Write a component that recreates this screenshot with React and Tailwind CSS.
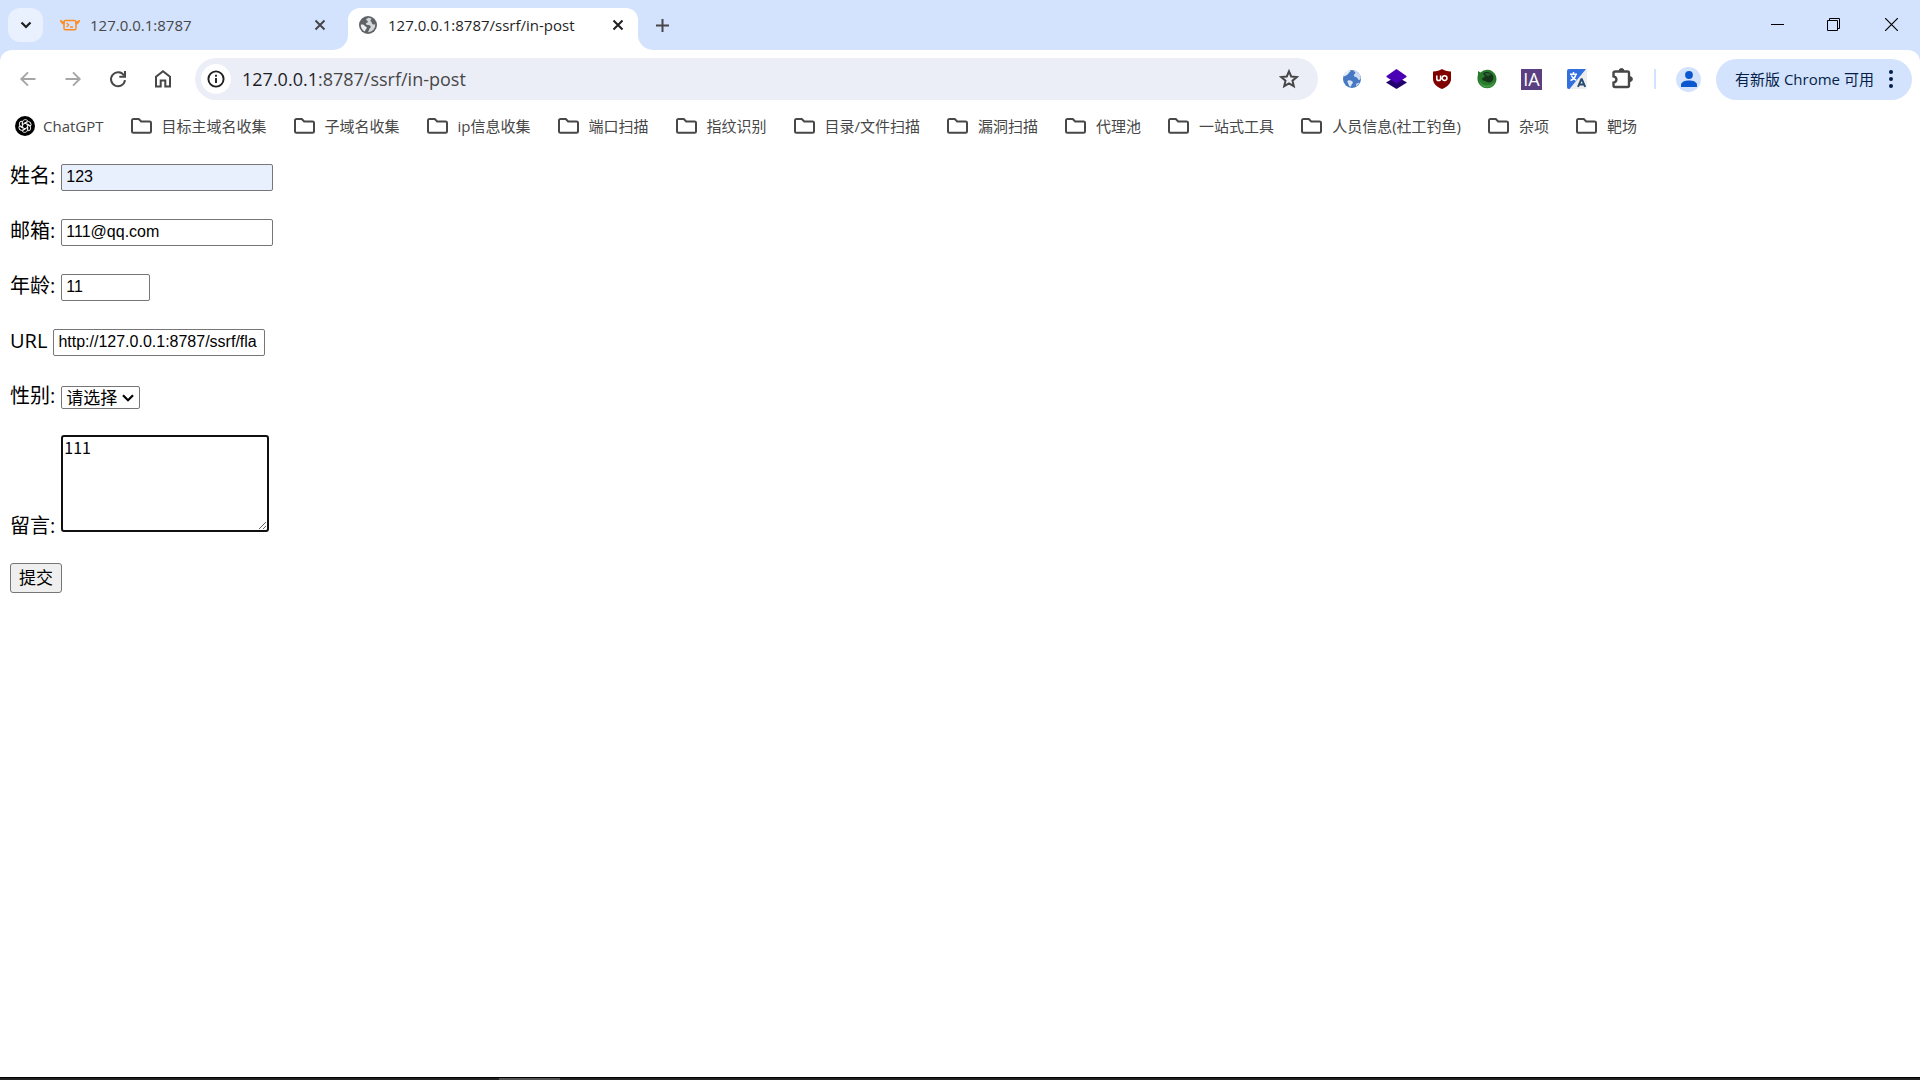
import { clsx } from 'clsx'

const folders = [
  '目标主域名收集',
  '子域名收集',
  'ip信息收集',
  '端口扫描',
  '指纹识别',
  '目录/文件扫描',
  '漏洞扫描',
  '代理池',
  '一站式工具',
  '人员信息(社工钓鱼)',
  '杂项',
  '靶场'
]

const fieldClass = 'h-[27px] rounded-[2px] border border-[#767676] px-1 pb-0.5 font-["Liberation_Sans",sans-serif] text-base leading-5 text-black outline-none'

function CloseIcon({ className }) {
  return (
    <svg viewBox="0 0 12 12" className={clsx('size-3', className)} fill="none" stroke="currentColor" strokeWidth="2">
      <path d="M1.5 1.5l9 9M10.5 1.5l-9 9" />
    </svg>
  )
}

function OxIcon() {
  return (
    <svg viewBox="0 0 20 12" className="h-3 w-5" fill="none" stroke="#ff8a1f">
      <path d="M.5 1c.2 2.600 1.200 4 3.600 4V3C2.700 3 1.500 2.300.5 1zM19.500 1c-.2 2.600-1.200 4-3.600 4V3c1.400 0 2.600-.7 3.600-2z" fill="#ff8a1f" strokeWidth="1" />
      <rect x="4" y="1.600" width="12" height="9.200" rx="1.600" strokeWidth="1.500" />
      <path d="M6.700 4l2 2-2 2M10 8h3" strokeWidth="1.300" />
    </svg>
  )
}

function GlobeIcon() {
  return (
    <svg viewBox="0 0 18 18" className="size-[18px]">
      <circle cx="9" cy="9" r="9" fill="#5f6368" />
      <path d="M9.500 1.700c-1.300.7-2.600 1.100-2.200 2.300.4 1 1.700.5 1.600 1.800-.1 1-1.600.8-1.900 1.800-.3.900.5 1.300 1.700 1.300 1.800 0 3 .6 3.100 1.800.1 1.300-1.200 1.400-1.600 2.500-.3 1-.5 2.100-1.400 3.100A7.300 7.300 0 0 0 16.200 8c-.9.7-2 .7-2.800 0-.8-.8-.3-1.700-1.200-2.300-1-.7-.8-1.600.3-3a7 7 0 0 0-3-1z" fill="#d5d7d9" />
      <path d="M1.800 8.500c1.800-.3 3.200.2 3.900 1.300.6 1 1.900.8 2.100 1.800.2 1.200-1.300 1.600-1.900 3.800A7.300 7.300 0 0 1 1.800 8.500z" fill="#eceded" />
    </svg>
  )
}

function BackIcon({ className }) {
  return (
    <svg viewBox="0 0 20 20" className={clsx('size-5', className)} fill="none" stroke="currentColor" strokeWidth="1.900">
      <path d="M17.500 10H4M10 3.300L3.300 10l6.700 6.700" />
    </svg>
  )
}

function ReloadIcon() {
  return (
    <svg viewBox="0 0 20 20" className="size-5" fill="none" stroke="currentColor" strokeWidth="2">
      <path d="M16 6.500A7 7 0 1 0 17 11.200" />
      <path d="M17 2v5.700h-5.700" />
    </svg>
  )
}

function HomeIcon() {
  return (
    <svg viewBox="0 0 20 20" className="size-5" fill="none" stroke="currentColor" strokeWidth="2">
      <path d="M3 17.500V7.800l7-5.500 7 5.500v9.700h-4.700v-6H7.700v6z" />
    </svg>
  )
}

function StarIcon() {
  return (
    <svg viewBox="0 0 20 20" className="size-5" fill="none" stroke="#474747" strokeWidth="2">
      <path d="M10 2.300l2.200 5.200 5.600.5-4.300 3.700 1.300 5.500-4.800-2.900-4.800 2.900 1.300-5.500L2.200 8l5.600-.5z" />
    </svg>
  )
}

function FolderIcon() {
  return (
    <svg viewBox="0 0 21 17" className="h-[17px] w-[21px] shrink-0" fill="none" stroke="#474747" strokeWidth="2">
      <path d="M2.500 1h5.300l2.400 2.400h8.300c.8 0 1.500.5 1.500 1.400v8.700c0 .8-.6 1.300-1.400 1.300H2.400c-.8 0-1.400-.5-1.400-1.300v-11C1 1.600 1.600 1 2.500 1z" />
    </svg>
  )
}

function ChatGptIcon() {
  return (
    <svg viewBox="0 0 20 20" className="size-5 shrink-0" fill="none" stroke="#fff" strokeWidth=".9">
      <circle cx="10" cy="10" r="10" fill="#000" stroke="none" />
      {[0, 60, 120, 180, 240, 300].map((angle) => (
        <path key={angle} transform={`rotate(${angle} 10 10)`} d="M7.600 11.400V6.300c0-3 4-3.600 5.200-1.200L8.800 7.500" />
      ))}
    </svg>
  )
}

function BlueGlobe() {
  return (
    <svg viewBox="0 0 20 20" className="size-5">
      <circle cx="10" cy="10" r="9" fill="#4678c4" />
      <path d="M1.300 7.500C2 4 4.500 1.500 8 1.200c.8.8.2 1.800-.8 2.300-1 .6-.6 1.800-2 2.300C4.300 6.200 3 7.500 1.300 7.500z" fill="#e3ecf7" />
      <path d="M11.500 1.300c3.500.5 6.300 3 7.200 6.700.2 2-.7 3.200-1.700 3-1.400-.4-.9-1.900-2.200-2.600-1.500-.8-2.800-.5-3-2-.1-1.400 1.500-1.300 1.700-2.300.1-.9-1.600-1.400-2-2.800z" fill="#cddcf0" />
      <path d="M6 11.500c2-.6 4 .3 4.700 1.500.6 1.200-.7 1.700-1.200 2.900-.3.800-.6 1.600-1.300 1.800C6.500 17 6.700 15 6 14c-.6-.8-1-1.600 0-2.500z" fill="#dbe6f5" />
      <path d="M14.500 14.500c1-.8 2-.8 2.800-.6-.6 1.300-1.800 2.600-3 3.300-.8-.7-.6-1.900.2-2.700z" fill="#b9cde9" />
    </svg>
  )
}

function LayersBox() {
  return (
    <svg viewBox="0 0 21 20" className="h-5 w-[21px]">
      <path d="M0 13.500l10.500-6 10.500 6L10.500 20z" fill="#21006e" />
      <path d="M.5 7L10.500 0l10 7v1l-10 6.500L.5 8z" fill="#4a00b4" />
    </svg>
  )
}

function ShieldIcon() {
  return (
    <svg viewBox="0 0 20 20" className="size-5">
      <path d="M10 0c2.500 1.700 5 2.400 9 2.500v7.500c0 5-4 7.800-9 10-5-2.200-9-5-9-10V2.500C5 2.400 7.500 1.700 10 0z" fill="#800000" />
      <path d="M4.800 6.500v3.200a1.900 1.900 0 0 0 3.800 0V6.500M8.600 9.500h1.500" fill="none" stroke="#fff" strokeWidth="1.500" />
      <circle cx="12.600" cy="9.100" r="2.400" fill="none" stroke="#fff" strokeWidth="1.500" />
    </svg>
  )
}

function GreenFox() {
  return (
    <svg viewBox="0 0 20 20" className="size-5">
      <path d="M1 2l2.500 1.500A9.300 9.300 0 0 1 17.500 4.500c2.500 2.700 2.600 7.500.3 10.700C15 19.700 8 20.500 4 17 0 14 0 9 1 5.500z" fill="#2a7a2e" />
      <path d="M6 4.500C9 1.500 15 3 16.300 7.500c.6 3.500-1.600 5.900-4.300 6-2.300 0-3-1.300-4.700-1.700C5.500 11.500 4.500 10 5.500 9c.9-.8 2-.6 2.300-1.600C8 6.300 6.700 6 6 4.500z" fill="#14351a" />
      <path d="M8 4.500c2.500-1 5-.3 6.500 1.500-1.500-.3-2.500.2-3 1.200-.9.200-2.800-.7-3.500-2.700z" fill="#2e5f33" />
      <path d="M2.500 10c.5 4.500 4.500 7 9 6.200 3-.5 5-2 6.500-4.700-.5 4.500-4 7-8 7-4.500 0-8-3.500-7.500-8.500z" fill="#3f9a43" />
    </svg>
  )
}

function TranslateIcon() {
  return (
    <svg viewBox="0 0 20 20" className="size-5">
      <path d="M2 0h18v18a2 2 0 0 1-2 2H0V2a2 2 0 0 1 2-2z" fill="#eceef0" />
      <path d="M2 0h17L2.500 20H2a2 2 0 0 1-2-2V2a2 2 0 0 1 2-2z" fill="#3270df" />
      <path d="M3 5.200h7M6.500 3v2M8.800 5.500c-.5 2.800-2.500 5-5.300 6M4.300 6.500c1 2.300 2.700 4 5 4.800" fill="none" stroke="#fff" strokeWidth="1.500" />
      <path d="M11 17.800l3.300-7.500h.6l3.300 7.500M12.300 15.500h4.600" fill="none" stroke="#294a70" strokeWidth="1.900" />
    </svg>
  )
}

function PuzzleIcon() {
  return (
    <svg viewBox="-1 1 22 22" className="size-[22px] shrink-0 overflow-visible">
      <path d="M3.500 4.500h12c1 0 1.500.6 1.500 1.500v12.500c0 1-.5 1.500-1.500 1.500H3c-.9 0-1.500-.5-1.500-1.400v-3c3.900-.8 3.900-5.400 0-6.200V6c0-1 .5-1.500 2-1.500z" fill="none" stroke="#474747" strokeWidth="2.400" />
      <path d="M7 4a2.500 2.500 0 0 1 5 0zM18 9.700a2.400 2.400 0 0 1 0 4.800z" fill="#474747" stroke="#474747" />
    </svg>
  )
}

const extensions = [
  { name: 'Proxy', icon: <BlueGlobe /> },
  { name: 'Wappalyzer', icon: <LayersBox /> },
  { name: 'uBlock', icon: <ShieldIcon /> },
  { name: 'HackBar', icon: <GreenFox /> },
  {
    name: 'IA',
    icon: (
      <span className="flex size-[21px] items-center justify-center bg-[#5a4080] font-['Open_Sans',sans-serif] text-lg leading-5 text-white">
        IA
      </span>
    )
  },
  { name: 'Translate', icon: <TranslateIcon /> },
  { name: 'Extensions', icon: <PuzzleIcon /> }
]

function TabStrip() {
  return (
    <div className="flex h-[50px] bg-[#d3e3fd] text-[15px] leading-5">
      <button aria-label="Search tabs" className="mt-2 ml-2 flex h-[34px] w-[35px] items-center justify-center rounded-xl bg-[#e9f0fe]">
        <svg viewBox="0 0 12 8" className="h-2 w-3" fill="none" stroke="#1f1f1f" strokeWidth="2.200">
          <path d="M1.500 1.500L6 6l4.500-4.500" />
        </svg>
      </button>
      <div className="flex w-[290px] items-center pl-[17px] text-[#474747]">
        <OxIcon />
        <span className="ml-2.5 flex-1">127.0.0.1:8787</span>
        <button aria-label="Close tab" className="mr-[7px]">
          <CloseIcon />
        </button>
      </div>
      <div className="size-[15px] self-end bg-white">
        <div className="size-full rounded-br-[15px] bg-[#d3e3fd]" />
      </div>
      <div className="mt-2 flex w-[290px] items-center rounded-t-xl bg-white pr-3.5 pb-2 pl-[11px] text-[#1f1f1f]">
        <GlobeIcon />
        <span className="ml-[11px] flex-1">127.0.0.1:8787/ssrf/in-post</span>
        <button aria-label="Close tab">
          <CloseIcon />
        </button>
      </div>
      <div className="size-[15px] self-end bg-white">
        <div className="size-full rounded-bl-[15px] bg-[#d3e3fd]" />
      </div>
      <button aria-label="New tab" className="ml-[3px] text-[#474747]">
        <svg viewBox="0 0 13 13" className="size-[13px]" fill="none" stroke="currentColor" strokeWidth="2">
          <path d="M6.500 0v13M0 6.500h13" />
        </svg>
      </button>
      <div className="ml-auto flex pb-0.5 text-black">
        <button aria-label="Minimize" className="flex w-[54px] items-center justify-center">
          <svg viewBox="0 0 13 13" className="size-[13px]" fill="none" stroke="currentColor">
            <path d="M0 6.500h13" />
          </svg>
        </button>
        <button aria-label="Restore" className="flex w-[58px] items-center justify-center">
          <svg viewBox="0 0 13 13" className="size-[13px]" fill="none" stroke="currentColor">
            <path d="M.5 2.500h10v10H.5zM2.500 2.500v-2h10v10h-2" />
          </svg>
        </button>
        <button aria-label="Close" className="flex w-[58px] items-center justify-center">
          <svg viewBox="0 0 13 13" className="size-[13px]" fill="none" stroke="currentColor" strokeWidth="1.200">
            <path d="M0 0l13 13M13 0L0 13" />
          </svg>
        </button>
      </div>
    </div>
  )
}

function Toolbar() {
  return (
    <div className="bg-[#d3e3fd]">
      <div className="flex h-[58px] items-center rounded-t-xl bg-white pr-2 pl-[18px] text-[#474747]">
        <div className="flex items-center gap-[25px]">
          <button aria-label="Back" className="text-[#a6a6a6]"><BackIcon /></button>
          <button aria-label="Forward" className="text-[#a6a6a6]"><BackIcon className="rotate-180" /></button>
          <button aria-label="Reload"><ReloadIcon /></button>
          <button aria-label="Home"><HomeIcon /></button>
        </div>
        <div className="ml-[22px] flex h-[42px] flex-1 items-center rounded-full bg-[#ebeef7] pr-[19px] pl-1.5">
          <button aria-label="Site information" className="flex size-[30px] items-center justify-center rounded-full bg-white">
            <svg viewBox="0 0 18 18" className="size-[18px]" fill="none" stroke="#1f1f1f" strokeWidth="1.900">
              <circle cx="9" cy="9" r="7.600" />
              <path d="M9 8v5M9 4.800v1.900" />
            </svg>
          </button>
          <div className="ml-[11px] flex-1 text-lg leading-6 text-[#474747]">
            <span className="text-[#1f1f1f]">127.0.0.1</span>:8787/ssrf/in-post
          </div>
          <button aria-label="Bookmark this page"><StarIcon /></button>
        </div>
        <div className="ml-[23px] flex items-center gap-6">
          {extensions.map((ext) => (
            <button key={ext.name} aria-label={ext.name} className="flex w-[21px] items-center justify-center">
              {ext.icon}
            </button>
          ))}
        </div>
        <div className="ml-[22px] h-5 w-0.5 bg-[#d3e3fd]" />
        <button aria-label="Profile" className="ml-5 flex size-[25px] items-center justify-center rounded-full bg-[#d3e3fd]">
          <svg viewBox="0 0 16 16" className="size-4" fill="#0b57d0">
            <circle cx="8" cy="4" r="3.900" />
            <path d="M0 16v-2.300C0 11 4 9.500 8 9.500s8 1.500 8 4.200V16z" />
          </svg>
        </button>
        <button className="ml-[15px] flex h-[41px] w-[196px] items-center justify-between rounded-full bg-[#d3e3fd] pr-[19px] pl-[19px] text-[15px] leading-5 whitespace-nowrap text-[#041e49]">
          有新版 Chrome 可用
          <svg viewBox="0 0 4 18" className="h-[18px] w-1" fill="#041e49">
            <circle cx="2" cy="2" r="2" />
            <circle cx="2" cy="9" r="2" />
            <circle cx="2" cy="16" r="2" />
          </svg>
        </button>
      </div>
    </div>
  )
}

function BookmarksBar() {
  return (
    <nav className="flex h-9 items-center gap-[27px] pl-[15px] text-[15px] leading-5 whitespace-nowrap text-[#474747]">
      <a href="#chatgpt" className="flex items-center gap-2">
        <ChatGptIcon />
        ChatGPT
      </a>
      {folders.map((name) => (
        <button key={name} className="flex items-center gap-2.5">
          <FolderIcon />
          {name}
        </button>
      ))}
    </nav>
  )
}

function Field({ id, label, children }) {
  return (
    <div className="flex h-[35px] items-center gap-1.5">
      <label htmlFor={id} className="pb-[3px]">{label}</label>
      {children}
    </div>
  )
}

export default function App() {
  return (
    <div className="flex min-h-screen flex-col bg-white font-['Open_Sans','Noto_Sans_CJK_SC',sans-serif]">
      <header>
        <TabStrip />
        <Toolbar />
        <BookmarksBar />
      </header>
      <main className="flex-1 px-2.5 pt-4 text-xl leading-7 text-black">
        <form className="flex flex-col items-start gap-5" onSubmit={(e) => e.preventDefault()}>
          <Field id="name" label="姓名:">
            <input id="name" type="text" defaultValue="123" className={clsx(fieldClass, 'w-[212px] bg-[#e8f0fe]')} />
          </Field>
          <Field id="email" label="邮箱:">
            <input id="email" type="email" defaultValue="111@qq.com" className={clsx(fieldClass, 'w-[212px]')} />
          </Field>
          <Field id="age" label="年龄:">
            <input id="age" type="number" defaultValue="11" className={clsx(fieldClass, 'w-[89px]')} />
          </Field>
          <Field id="url" label="URL">
            <input id="url" type="text" defaultValue="http://127.0.0.1:8787/ssrf/fla" className={clsx(fieldClass, 'w-[212px]')} />
          </Field>
          <Field id="gender" label="性别:">
            <div className="relative flex">
              <select id="gender" className="h-[23px] w-[79px] appearance-none rounded-[2px] border border-[#767676] bg-white pl-1 text-[17px] leading-5">
                <option>请选择</option>
                <option>男</option>
                <option>女</option>
              </select>
              <svg viewBox="0 0 12 8" className="pointer-events-none absolute top-2 right-1.5 h-2 w-3" fill="none" stroke="#000" strokeWidth="2.200">
                <path d="M1 1.200l5 5 5-5" />
              </svg>
            </div>
          </Field>
          <div className="flex items-end gap-1.5">
            <label htmlFor="message" className="-mb-2">留言:</label>
            <textarea
              id="message"
              defaultValue="111"
              className="h-[97px] w-[208px] rounded-[3px] border-2 border-[#101010] px-px py-0 font-['Noto_Sans_CJK_SC',monospace] text-base leading-5 outline-none"
            />
          </div>
          <button type="submit" className="mt-[11px] h-[30px] w-[52px] rounded-[3px] border border-[#767676] bg-[#efefef] text-[17px] leading-5">
            提交
          </button>
        </form>
      </main>
      <footer className="flex h-[3px] border-t border-black bg-[#222]">
        <div className="ml-[26%] w-[61px] bg-[#555]" />
      </footer>
    </div>
  )
}
